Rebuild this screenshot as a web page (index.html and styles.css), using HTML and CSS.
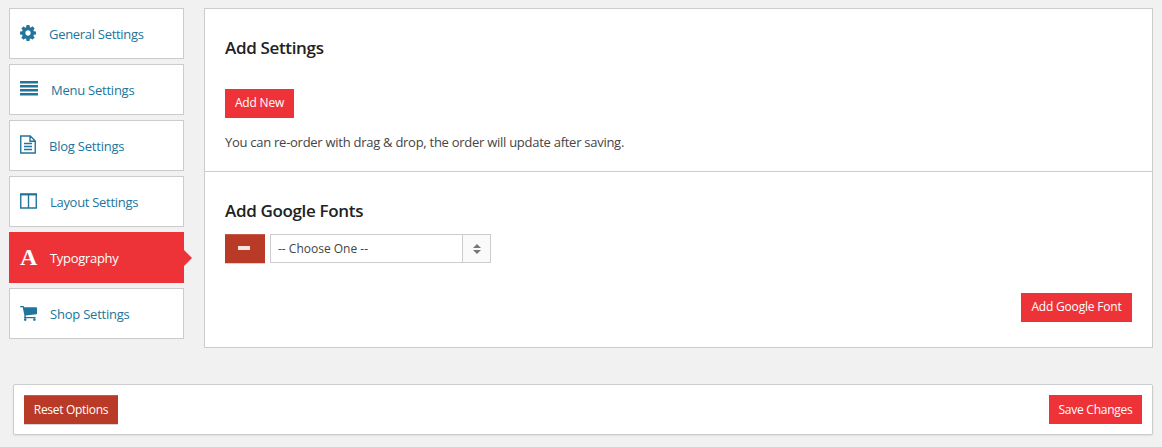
FILE: index.html
```html
<!DOCTYPE html>
<html lang="en">
<head>
<meta charset="UTF-8" />
<title>Theme Options</title>
<meta name="viewport" content="width=device-width, initial-scale=1" />
<link rel="stylesheet" href="styles.css">
</head>
<body>
<div class="options">
  <nav class="tabs">
    <a class="tab tab-general" href="#general">
      <svg class="icon" width="16" height="16" viewBox="128 128 1536 1536"><path d="M1152 896q0-106-75-181t-181-75-181 75-75 181 75 181 181 75 181-75 75-181zm512-109v222q0 12-8 23t-20 13l-185 28q-19 54-39 91 35 50 107 138 10 12 10 25t-9 23q-27 37-99 108t-94 71q-12 0-26-9l-138-108q-44 23-91 38-16 136-29 186-7 28-36 28h-222q-14 0-24.5-8.5t-11.5-21.5l-28-184q-49-16-90-37l-141 107q-10 9-25 9-14 0-25-11-126-114-165-168-7-10-7-23 0-12 8-23 15-21 51-66.5t54-70.5q-27-50-41-99l-183-27q-13-2-21-12.5t-8-23.5v-222q0-12 8-23t19-13l186-28q14-46 39-92-40-57-107-138-10-12-10-24 0-10 9-23 26-36 98.5-107.5t94.5-71.5q13 0 26 10l138 107q44-23 91-38 16-136 29-186 7-28 36-28h222q14 0 24.5 8.5t11.5 21.5l28 184q49 16 90 37l142-107q9-9 24-9 13 0 25 10 129 119 165 170 7 8 7 22 0 12-8 23-15 21-51 66.5t-54 70.5q26 50 41 98l183 28q13 2 21 12.5t8 23.5z"/></svg>
      <span class="label">General Settings</span>
    </a>
    <a class="tab tab-menu" href="#menu">
      <svg class="icon" width="18" height="15" viewBox="0 0 18 15"><path d="M0 0h18v2.4H0zM0 4h18v2.4H0zM0 8h18v2.4H0zM0 12h18v2.4H0z"/></svg>
      <span class="label">Menu Settings</span>
    </a>
    <a class="tab tab-blog" href="#blog">
      <svg class="icon line" width="16" height="19" viewBox="0 0 16 19"><path d="M.75 1h9.5l5 5v12H.75zM10 1v5.25h5M4 8.5h8M4 11.5h8M4 14.5h8"/></svg>
      <span class="label">Blog Settings</span>
    </a>
    <a class="tab tab-layout" href="#layout">
      <svg class="icon line" width="17" height="16" viewBox="0 0 17 16"><path d="M.75 1.5h15.5v13.5H.75zM8.5 2v13"/><path d="M0 1.25h17" stroke-width="2"/></svg>
      <span class="label">Layout Settings</span>
    </a>
    <a class="tab tab-type active" href="#typography">
      <span class="letter">A</span>
      <span class="label">Typography</span>
    </a>
    <a class="tab tab-shop" href="#shop">
      <svg class="icon" width="17" height="15" viewBox="64 256 1664 1408" preserveAspectRatio="none"><path d="M704 1536q0 52-38 90t-90 38-90-38-38-90 38-90 90-38 90 38 38 90zm896 0q0 52-38 90t-90 38-90-38-38-90 38-90 90-38 90 38 38 90zm128-1088v512q0 24-16.5 42.5t-40.5 21.5l-1044 122q13 60 13 70 0 16-24 64h920q26 0 45 19t19 45-19 45-45 19h-1024q-26 0-45-19t-19-45q0-11 8-31.5t16-36 21.5-40 15.5-29.5l-177-823h-204q-26 0-45-19t-19-45 19-45 45-19h256q16 0 28.5 6.5t19.5 15.5 13 24.5 8 26 5.5 29.5 4.5 26h1201q26 0 45 19t19 45z"/></svg>
      <span class="label">Shop Settings</span>
    </a>
  </nav>

  <main class="panel">
    <section class="block block-add">
      <h3>Add Settings</h3>
      <button class="btn add-new">Add New</button>
      <p>You can re-order with drag &amp; drop, the order will update after saving.</p>
    </section>
    <section class="block block-fonts">
      <h3>Add Google Fonts</h3>
      <div class="font-row">
        <button class="btn btn-dark remove" aria-label="Remove"><span class="minus"></span></button>
        <div class="select">
          <span class="value">-- Choose One --</span>
          <span class="handle"><svg width="8" height="10" viewBox="0 0 8 10"><path d="M4 0l4 4H0zM0 6h8l-4 4z"/></svg></span>
        </div>
      </div>
      <div class="actions"><button class="btn add-font">Add Google Font</button></div>
    </section>
  </main>
</div>

<footer class="bar">
  <button class="btn btn-dark reset">Reset Options</button>
  <button class="btn save">Save Changes</button>
</footer>
</body>
</html>
```
FILE: styles.css
```css
:root {
  --bg:#f1f1f1;
  --border:#ccc;
  --red:#ee3338;
  --dark-red:#b93a27;
  --link:#21759b;
  --text:#444;
}

* { box-sizing:border-box; }
body { margin:0; height:447px; overflow:hidden; background:var(--bg); color:var(--text); font:13px/20px "Segoe UI","Open Sans",sans-serif; padding:8px 9px 0; }

.options { display:flex; align-items:flex-start; gap:20px; }

.tabs { width:175px; display:flex; flex-direction:column; gap:5px; }
.tab { position:relative; height:51px; display:flex; align-items:center; padding-left:10px; background:#fff; border:1px solid var(--border); color:var(--link); text-decoration:none; white-space:nowrap; }
.tab.active { background:var(--red); border-color:var(--red); color:#fff; }
.tab.active::after { content:""; position:absolute; left:174px; top:17px; border:solid transparent; border-width:8px 0 8px 8px; border-left-color:var(--red); }
.icon { flex:none; fill:currentColor; }
.icon.line { fill:none; stroke:currentColor; stroke-width:1.4; }
.label { padding-top:1px; letter-spacing:-.3px; }
.tab-general .icon { margin:0 13px 1px 0; }
.tab-menu .icon { margin:0 13px 2px 0; }
.tab-menu .label { letter-spacing:-.24px; }
.tab-blog .icon { margin:0 13px 2px 0; }
.tab-blog .label { letter-spacing:-.22px; }
.tab-layout .icon { margin:0 13px 1px 0; }
.tab-shop .icon { margin:0 13px 0 0; }
.tab-shop .label { letter-spacing:-.22px; }
.letter { width:30px; font:bold 24px/24px "Liberation Serif",serif; margin-bottom:2px; }

.panel { flex:1; height:340px; background:#fff; border:1px solid var(--border); }
.block { padding:29px 20px 0; }
.block-add { height:163px; border-bottom:1px solid var(--border); }
h3 { margin:0; color:#222; font-size:17px; line-height:20px; font-weight:600; letter-spacing:-.34px; }
p { margin:14px 0 0; letter-spacing:-.27px; }

.btn { display:block; height:29px; padding:0 0 2px; border:0; background:var(--red); color:#fff; font:12px/27px "Segoe UI","Open Sans",sans-serif; letter-spacing:-.2px; text-align:center; white-space:nowrap; }
.btn-dark { background:var(--dark-red); border-top:1px solid #c85a4a; box-shadow:0 1px 0 #d5d5d5; }
.add-new { width:69px; margin-top:31px; }
.font-row { display:flex; gap:5px; margin-top:13px; }
.remove { width:40px; }
.minus { display:block; width:12px; height:4px; margin:0 0 0 13px; background:#f6e4e1; }
.select { display:flex; width:221px; height:29px; border:1px solid var(--border); font-size:12px; line-height:27px; }
.value { flex:1; padding-left:7px; }
.handle { width:28px; display:flex; align-items:center; justify-content:center; background:#fafafa; border-left:1px solid var(--border); fill:#777; }
.actions { display:flex; justify-content:flex-end; margin-top:30px; }
.add-font { width:111px; }

.bar { display:flex; justify-content:space-between; align-items:center; height:51px; margin:36px 0 0 4px; padding:0 10px; background:#fff; border:1px solid var(--border); border-radius:2px; box-shadow:0 1px 2px rgba(0,0,0,.08); }
.reset { width:94px; letter-spacing:-.3px; }
.save { width:93px; padding-bottom:1px; letter-spacing:-.25px; }
```
